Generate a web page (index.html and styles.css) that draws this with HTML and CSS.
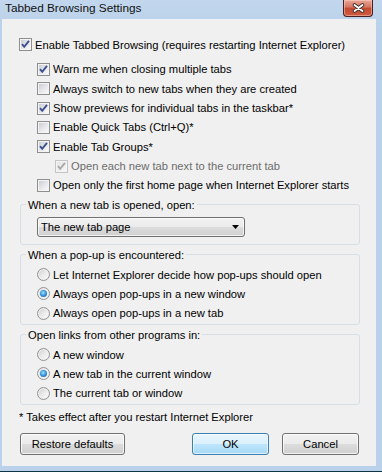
FILE: index.html
```html
<!DOCTYPE html>
<html lang="en">
<head>
    <meta charset="utf-8">
    <meta name="viewport" content="width=device-width, initial-scale=1">
    <title>Tabbed Browsing Settings</title>
    <link rel="stylesheet" href="styles.css">
</head>
<body>
    <div class="window">
        <div class="titlebar">
            <span class="title">Tabbed Browsing Settings</span>
            <button class="close-btn" aria-label="Close">
                <svg width="13" height="10" viewBox="0 0 13 10">
                    <path d="M2.5 2l8 6M10.5 2l-8 6" stroke="#3a3030" stroke-width="3.6" stroke-linecap="round" fill="none"/>
                    <path d="M2.5 2l8 6M10.5 2l-8 6" stroke="#fff" stroke-width="1.8" stroke-linecap="round" fill="none"/>
                </svg>
            </button>
        </div>

        <div class="client">
            <div class="row top-row">
                <span class="check"><svg width="11" height="11" viewBox="0 0 11 11"><path d="M2 5.2l2.2 2.6L9 1.8" stroke="#3f4f8f" stroke-width="1.9" fill="none"/></svg></span>
                Enable Tabbed Browsing (requires restarting Internet Explorer)
            </div>

            <div class="options">
                <div class="row">
                    <span class="check"><svg width="11" height="11" viewBox="0 0 11 11"><path d="M2 5.2l2.2 2.6L9 1.8" stroke="#3f4f8f" stroke-width="1.9" fill="none"/></svg></span>
                    Warn me when closing multiple tabs
                </div>
                <div class="row">
                    <span class="check"></span>
                    Always switch to new tabs when they are created
                </div>
                <div class="row">
                    <span class="check"><svg width="11" height="11" viewBox="0 0 11 11"><path d="M2 5.2l2.2 2.6L9 1.8" stroke="#3f4f8f" stroke-width="1.9" fill="none"/></svg></span>
                    Show previews for individual tabs in the taskbar*
                </div>
                <div class="row">
                    <span class="check"></span>
                    Enable Quick Tabs (Ctrl+Q)*
                </div>
                <div class="row">
                    <span class="check"><svg width="11" height="11" viewBox="0 0 11 11"><path d="M2 5.2l2.2 2.6L9 1.8" stroke="#3f4f8f" stroke-width="1.9" fill="none"/></svg></span>
                    Enable Tab Groups*
                </div>
                <div class="row nested disabled">
                    <span class="check"><svg width="11" height="11" viewBox="0 0 11 11"><path d="M2 5.2l2.2 2.6L9 1.8" stroke="#a9a9a9" stroke-width="1.9" fill="none"/></svg></span>
                    Open each new tab next to the current tab
                </div>
                <div class="row">
                    <span class="check"></span>
                    Open only the first home page when Internet Explorer starts
                </div>
            </div>

            <fieldset class="group first">
                <legend>When a new tab is opened, open:</legend>
                <div class="combo">
                    <span>The new tab page</span>
                    <svg width="7" height="4" viewBox="0 0 7 4"><path d="M0 0h7L3.5 4z" fill="#000"/></svg>
                </div>
            </fieldset>

            <fieldset class="group">
                <legend>When a pop-up is encountered:</legend>
                <div class="choices">
                    <div class="row"><span class="radio"></span>Let Internet Explorer decide how pop-ups should open</div>
                    <div class="row"><span class="radio on"></span>Always open pop-ups in a new window</div>
                    <div class="row"><span class="radio"></span>Always open pop-ups in a new tab</div>
                </div>
            </fieldset>

            <fieldset class="group">
                <legend>Open links from other programs in:</legend>
                <div class="choices">
                    <div class="row"><span class="radio"></span>A new window</div>
                    <div class="row"><span class="radio on"></span>A new tab in the current window</div>
                    <div class="row"><span class="radio"></span>The current tab or window</div>
                </div>
            </fieldset>

            <div class="note">* Takes effect after you restart Internet Explorer</div>

            <div class="buttons">
                <button class="btn restore">Restore defaults</button>
                <span class="spacer"></span>
                <button class="btn default">OK</button>
                <button class="btn">Cancel</button>
            </div>
        </div>
    </div>
</body>
</html>
```

FILE: styles.css
```css
/* 全体 */
body {
    margin: 0;
    font-family: "Liberation Sans", Arial, sans-serif;
    font-size: 11.2px;
    color: #000;
    background-color: #b9d1ea;
}

.window {
    width: 382px;
    height: 472px;
    box-sizing: border-box;
    display: flex;
    flex-direction: column;
    background: linear-gradient(#c2d7ed, #b9d1ea 30px);
    border-bottom: 1px solid #0f3442;
}

/* タイトルバー */
.titlebar {
    height: 19px;
    flex: none;
    display: flex;
    justify-content: space-between;
    align-items: flex-start;
    padding: 0 9px 0 5px;
}

.title {
    font-size: 11.8px;
    line-height: 17px;
    color: #111;
}

.close-btn {
    width: 30px;
    height: 17px;
    padding: 0;
    box-sizing: border-box;
    display: flex;
    align-items: center;
    justify-content: center;
    border: 1px solid #4a1e22;
    border-top: none;
    border-radius: 0 0 4px 4px;
    background: linear-gradient(#e9a896, #d7735f 45%, #c24a32 50%, #cf5b40);
    box-shadow: inset 0 0 0 1px rgba(255, 220, 210, 0.45);
}

/* クライアント領域 */
.client {
    flex: 1;
    margin: 0 6px 5px 2px;
    padding: 16px 16px 0 17px;
    background: #f0f0f0;
}

.row {
    display: flex;
    align-items: center;
    height: 19.33px;
    white-space: nowrap;
}

.top-row {
    height: 19px;
    margin-bottom: 5.8px;
}

.options {
    padding-left: 18px;
}

.nested {
    padding-left: 18px;
}

.disabled {
    color: #6d6d6d;
}

/* チェックボックス */
.check {
    position: relative;
    flex: none;
    width: 13px;
    height: 13px;
    box-sizing: border-box;
    margin-right: 3px;
    display: flex;
    align-items: center;
    justify-content: center;
    border: 1px solid #8e8f8f;
    background: #f4f4f4;
}

.check::before {
    content: "";
    position: absolute;
    inset: 1px;
    background: linear-gradient(135deg, #c9ccd1, #e4e6e9 50%, #f8f8f8);
}

.check svg {
    position: relative;
}

.disabled .check {
    border-color: #c4c4c4;
}

.disabled .check::before {
    background: linear-gradient(135deg, #e4e4e4, #f6f6f6);
}

/* ラジオボタン */
.radio {
    position: relative;
    flex: none;
    width: 13px;
    height: 13px;
    box-sizing: border-box;
    margin-right: 3px;
    border-radius: 50%;
    border: 1px solid #929292;
    background: linear-gradient(135deg, #cfcfcf, #ececec 55%, #fdfdfd);
    box-shadow: inset 0 0 0 1px #f0f0f0;
}

.radio.on::after {
    content: "";
    position: absolute;
    inset: 2px;
    border-radius: 50%;
    background: radial-gradient(circle at 45% 40%, #a6e2ff 0%, #3a9be0 45%, #104f8c 100%);
}

/* グループボックス */
.group {
    margin: 3px 0 0 1px;
    padding: 0 0 1px 5px;
    border: 1px solid #d5dfe5;
    border-radius: 3px;
    min-inline-size: 0;
}

.group.first {
    margin-top: 2.8px;
    padding-bottom: 7px;
}

.group legend {
    padding: 0 2px;
    line-height: 14px;
}

.choices {
    margin-left: 11px;
    padding-top: 3px;
}

.combo {
    width: 208px;
    height: 20px;
    box-sizing: border-box;
    margin: 5px 0 0 11px;
    padding: 0 5px 0 3px;
    display: flex;
    align-items: center;
    justify-content: space-between;
    border: 1px solid #707070;
    border-radius: 3px;
    background: linear-gradient(#f2f2f2, #ebebeb 50%, #dddddd 50%, #cfcfcf);
    box-shadow: inset 0 0 0 1px rgba(255, 255, 255, 0.7);
}

.note {
    height: 19px;
    line-height: 19px;
    margin-top: 3px;
    white-space: nowrap;
}

/* ボタン */
.buttons {
    display: flex;
    gap: 13px;
    margin: 6px 1px 0 1px;
}

.spacer {
    flex: 1;
}

.btn {
    width: 77px;
    height: 22px;
    padding: 0;
    font: inherit;
    color: #000;
    border: 1px solid #707070;
    border-radius: 3px;
    background: linear-gradient(#f2f2f2, #ebebeb 50%, #dddddd 50%, #cfcfcf);
    box-shadow: inset 0 0 0 1px rgba(255, 255, 255, 0.75);
}

.btn.restore {
    width: 105px;
}

.btn.default {
    border-color: #3c7fb1;
    background: linear-gradient(#eaf6fd, #d9f0fc 50%, #bee6fd 50%, #a7d9f5);
    box-shadow: inset 0 0 0 1px rgba(255, 255, 255, 0.6);
}
```
